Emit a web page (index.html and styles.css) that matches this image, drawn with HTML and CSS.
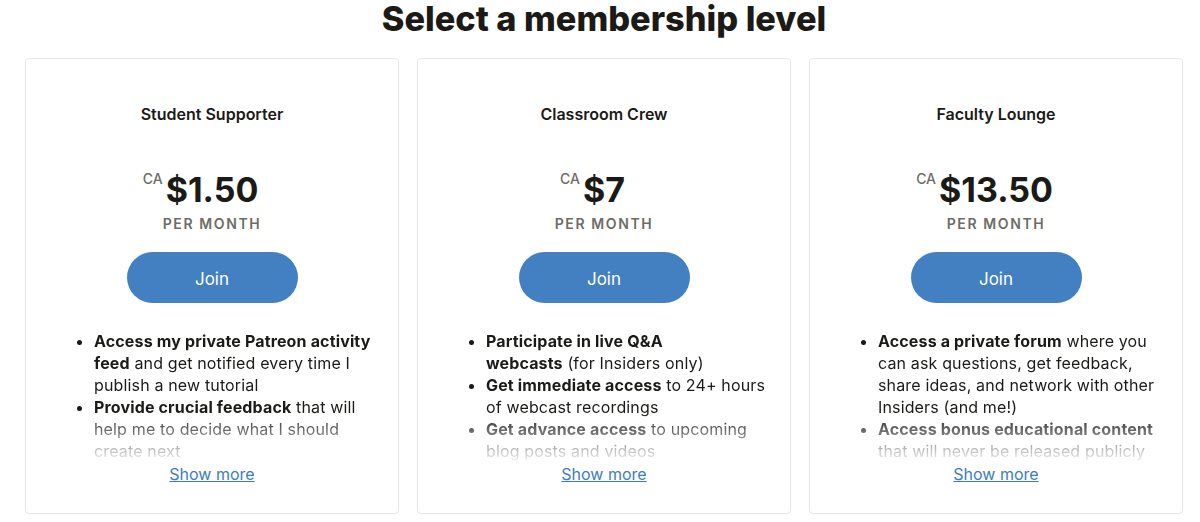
FILE: index.html
```html
<!DOCTYPE html>
<html lang="en">
<head>
    <meta charset="UTF-8">
    <meta name="viewport" content="width=device-width, initial-scale=1.0">
    <title>Select a membership level</title>
    <link rel="stylesheet" href="styles.css">
</head>
<body>
    <h1 class="titulo">Select a membership level</h1>
    <div class="niveis">
        <div class="nivel">
            <h2 class="nome">Student Supporter</h2>
            <div class="preco"><span class="moeda">CA</span>$1.50</div>
            <div class="periodo">PER MONTH</div>
            <button class="entrar">Join</button>
            <ul class="beneficios">
                <li><b>Access my private Patreon activity feed</b> and get notified every time I publish a new tutorial</li>
                <li><b>Provide crucial feedback</b> that will help me to decide what I should create next</li>
            </ul>
            <a class="mais" href="#">Show more</a>
        </div>
        <div class="nivel">
            <h2 class="nome">Classroom Crew</h2>
            <div class="preco"><span class="moeda">CA</span>$7</div>
            <div class="periodo">PER MONTH</div>
            <button class="entrar">Join</button>
            <ul class="beneficios">
                <li><b>Participate in live Q&amp;A<br>webcasts</b> (for Insiders only)</li>
                <li><b>Get immediate access</b> to 24+ hours of webcast recordings</li>
                <li><b>Get advance access</b> to upcoming blog posts and videos</li>
            </ul>
            <a class="mais" href="#">Show more</a>
        </div>
        <div class="nivel">
            <h2 class="nome">Faculty Lounge</h2>
            <div class="preco"><span class="moeda">CA</span>$13.50</div>
            <div class="periodo">PER MONTH</div>
            <button class="entrar">Join</button>
            <ul class="beneficios">
                <li><b>Access a private forum</b> where you can ask questions, get feedback, share ideas, and network with other Insiders (and me!)</li>
                <li><b>Access bonus educational content</b> that will never be released publicly</li>
            </ul>
            <a class="mais" href="#">Show more</a>
        </div>
    </div>
</body>
</html>
```

FILE: styles.css
```css
body {
    margin: 0;
    background-color: white;
    color: #1b1a17;
    font-family: Inter, "Noto Sans", sans-serif;
}
.titulo {
    margin: 0;
    padding-left: 8px;
    height: 40px;
    font-size: 34.3px;
    font-weight: 800;
    line-height: 38px;
    text-align: center;
}
.niveis {
    display: grid;
    grid-template-columns: repeat(3, 374px);
    gap: 18px;
    margin: 18px 0 0 25px;
}
.nivel {
    height: 456px;
    box-sizing: border-box;
    border: 1px solid #e6e6e6;
    border-radius: 4px;
    padding-top: 43px;
    display: flex;
    flex-direction: column;
    align-items: center;
}
.nome {
    margin: 0;
    font-size: 16px;
    font-weight: 600;
    line-height: 24px;
}
.preco {
    margin-top: 44px;
    font-size: 34px;
    font-weight: 700;
    line-height: 40px;
    position: relative;
}
.moeda {
    position: absolute;
    right: 100%;
    top: -1px;
    margin-right: 3px;
    font-size: 14px;
    font-weight: 500;
    line-height: 20px;
    color: #6d6c65;
}
.periodo {
    margin-top: 4px;
    font-size: 14px;
    font-weight: 600;
    line-height: 20px;
    letter-spacing: 1.6px;
    color: #6d6c65;
}
.entrar {
    margin-top: 18px;
    padding-top: 3px;
    width: 171px;
    height: 51px;
    border: none;
    border-radius: 26px;
    background-color: #4280c2;
    color: white;
    font-family: inherit;
    font-size: 17px;
    cursor: pointer;
}
.beneficios {
    align-self: stretch;
    margin: 27px 0 0 0;
    padding: 0 16px 0 68px;
    height: 132px;
    overflow: hidden;
    font-size: 16px;
    line-height: 22px;
    letter-spacing: 0.15px;
    -webkit-mask-image: linear-gradient(to bottom, black 62%, rgba(0, 0, 0, 0.06) 100%);
    mask-image: linear-gradient(to bottom, black 62%, rgba(0, 0, 0, 0.06) 100%);
}
.beneficios b {
    font-weight: 700;
}
.mais {
    margin-top: 1px;
    font-size: 16px;
    line-height: 22px;
    color: #3c7cc2;
}
```
